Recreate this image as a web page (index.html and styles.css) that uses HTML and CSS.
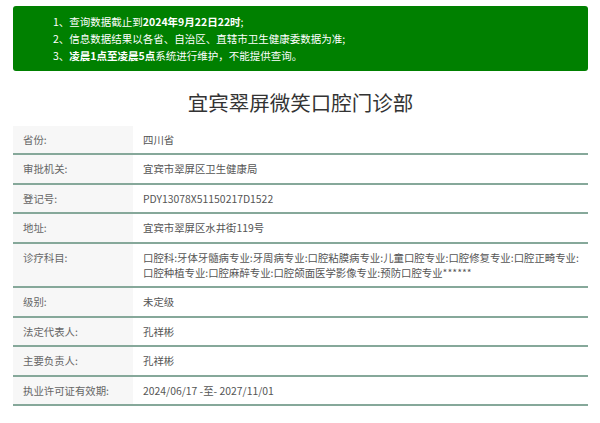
FILE: index.html
```html
<!DOCTYPE html>
<html lang="zh">
<head>
<meta charset="utf-8">
<link rel="stylesheet" href="styles.css">
</head>
<body>
<div class="notice">
  <p>1、查询数据截止到<b>2024年9月22日22时</b>;</p>
  <p>2、信息数据结果以各省、自治区、直辖市卫生健康委数据为准;</p>
  <p>3、<b>凌晨1点至凌晨5点</b>系统进行维护，不能提供查询。</p>
</div>
<h1 class="title">宜宾翠屏微笑口腔门诊部</h1>
<div class="table">
  <div class="row"><div class="label">省份:</div><div class="value">四川省</div></div>
  <div class="row"><div class="label">审批机关:</div><div class="value">宜宾市翠屏区卫生健康局</div></div>
  <div class="row"><div class="label">登记号:</div><div class="value">PDY13078X51150217D1522</div></div>
  <div class="row"><div class="label">地址:</div><div class="value">宜宾市翠屏区水井街119号</div></div>
  <div class="row"><div class="label">诊疗科目:</div><div class="value"><span class="item">口腔科:</span><span class="item">牙体牙髓病专业:</span><span class="item">牙周病专业:</span><span class="item">口腔粘膜病专业:</span><span class="item">儿童口腔专业:</span><span class="item">口腔修复专业:</span><span class="item">口腔正畸专业:</span><span class="item">口腔种植专业:</span><span class="item">口腔麻醉专业:</span><span class="item">口腔颌面医学影像专业:</span><span class="item">预防口腔专业******</span></div></div>
  <div class="row"><div class="label">级别:</div><div class="value">未定级</div></div>
  <div class="row"><div class="label">法定代表人:</div><div class="value">孔祥彬</div></div>
  <div class="row"><div class="label">主要负责人:</div><div class="value">孔祥彬</div></div>
  <div class="row"><div class="label">执业许可证有效期:</div><div class="value">2024/06/17 -至- 2027/11/01</div></div>
</div>
</body>
</html>
```
FILE: styles.css
```css
html, body {
  margin: 0;
  padding: 0;
  background: #fff;
}
body {
  padding: 6px 12px 0 13px;
  font-family: "Noto Sans CJK SC", "Noto Sans", sans-serif;
}
.notice {
  background: #008000;
  color: #fff;
  border-radius: 3px;
  padding: 7px 0 7px 40px;
  font-size: 10.5px;
  line-height: 17px;
}
.notice p {
  margin: 0;
}
.notice b {
  font-weight: 700;
}
.title {
  margin: 0;
  height: 55px;
  line-height: 63px;
  text-align: center;
  font-size: 20.5px;
  font-weight: 400;
  color: #333;
}
.table {
  display: flex;
  flex-direction: column;
  font-size: 10.4px;
  line-height: 15.4px;
}
.row {
  display: flex;
  border-bottom: 2px solid #86a89a;
}
.label {
  flex: 0 0 120px;
  box-sizing: border-box;
  background: #f7f7f7;
  color: #666;
  padding: 6px 0 6px 10px;
}
.value {
  flex: 1;
  color: #555;
  padding: 6px 2px 6px 10px;
}
.item {
  white-space: nowrap;
}
```
